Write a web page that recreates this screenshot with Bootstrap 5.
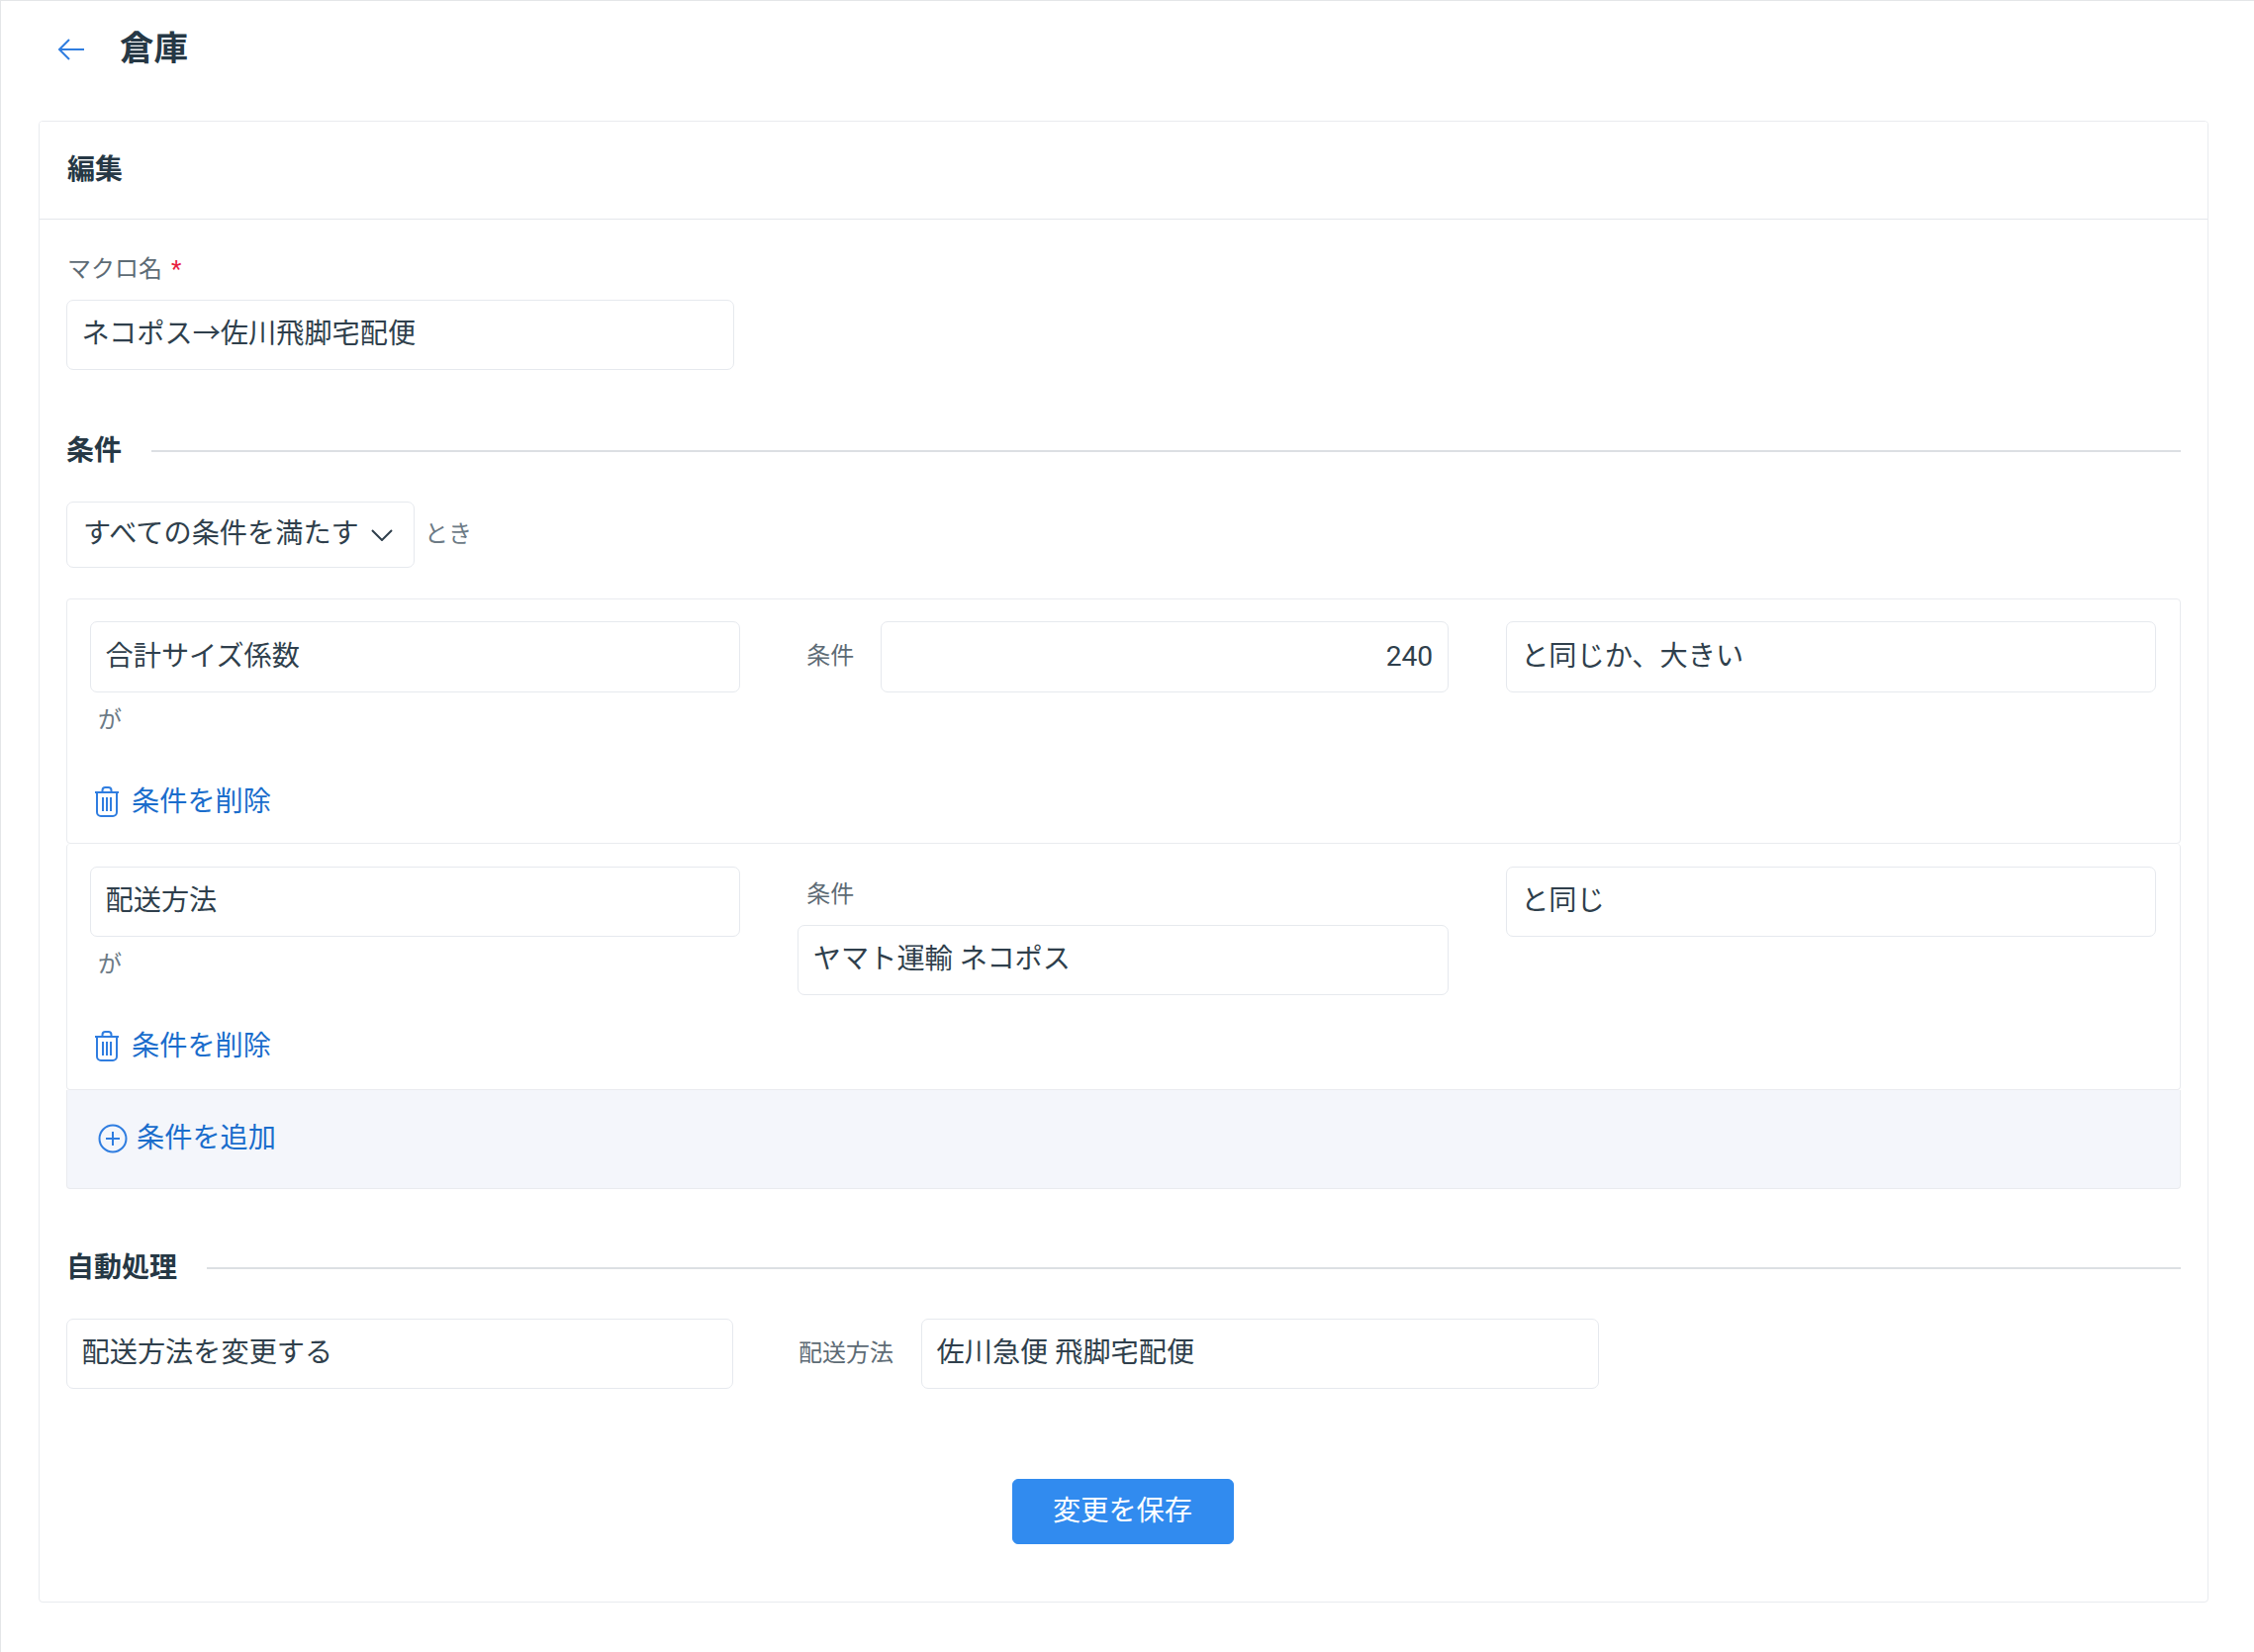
<!DOCTYPE html>
<html lang="ja">
<head>
    <meta charset="UTF-8">
    <meta name="viewport" content="width=device-width, initial-scale=1.0">
    <title>倉庫</title>
    <link href="https://cdn.jsdelivr.net/npm/bootstrap@5.3.0/dist/css/bootstrap.min.css" rel="stylesheet">
    <style>
        body {
            font-family: Roboto, "Noto Sans CJK JP", sans-serif;
            color: #2f3f4c;
            background: #fff;
        }
        .app-frame {
            min-height: 100vh;
            border-top: 1px solid #e4e6e8;
            border-left: 1px solid #e4e6e8;
            padding: 0 46px 0 38px;
        }
        .page-head {
            height: 97px;
            margin-bottom: 24px;
            margin-left: 19px;
        }
        .page-title {
            font-size: 34.5px;
            font-weight: 700;
            color: #263845;
            margin: 0 0 0 35px;
        }
        .edit-card {
            --bs-card-border-color: #e9ebef;
            --bs-card-cap-bg: #fff;
            --bs-card-border-radius: 4px;
            --bs-card-inner-border-radius: 3px;
            padding: 0;
        }
        .edit-card .card-header {
            height: 99px;
            padding: 0 28px;
            font-size: 28px;
            font-weight: 700;
            color: #263845;
            border-bottom-color: #e4e7eb;
        }
        .edit-card .card-body {
            padding: 33px 27px 58px 27px;
        }
        .field-label {
            font-size: 24px;
            line-height: 34px;
            color: #5d6b75;
            margin-left: 1px;
            margin-bottom: 14px;
        }
        .field-label .req {
            color: #e8203f;
            font-size: 24px;
            margin-left: 9px;
        }
        .ctl {
            height: 71px;
            padding: 0 14.5px;
            font-size: 28.2px;
            line-height: 1;
            color: #2f3f4c;
            border: 1.5px solid #e6e9ee;
            border-radius: 7px;
            display: flex;
            align-items: center;
        }
        .name-box {
            width: 675px;
        }
        .section-head {
            height: 40px;
            font-size: 28px;
            font-weight: 700;
            color: #263845;
            margin-top: 62px;
            margin-bottom: 31px;
            gap: 30px;
        }
        .cond-list + .section-head {
            margin-top: 60px;
        }
        .section-rule {
            height: 2px;
            background: #dcdfe3;
        }
        .match-select {
            width: 352px;
            height: 67px;
            padding: 0 21px 0 16px;
            justify-content: space-between;
        }
        .match-note {
            font-size: 24px;
            color: #6c7a85;
            margin: 0 0 2px 10px;
        }
        .cond-list {
            --bs-list-group-border-color: #e9ebef;
            --bs-list-group-border-radius: 4px;
            margin-top: 31px;
        }
        .cond-item {
            padding: 22px 24px 19px 23px;
            border-radius: 4px;
        }
        .cond-item:first-child .ctl {
            height: 72px;
        }
        .cond-item + .cond-item {
            padding-top: 23px;
            padding-bottom: 21px;
        }
        .cond-item + .cond-item .ga-note {
            margin-bottom: 47px;
        }
        .cond-row {
            --bs-gutter-x: 58px;
        }
        .ga-note {
            font-size: 24px;
            line-height: 34px;
            color: #6c7a85;
            margin: 11px 0 46px 8px;
        }
        .cond-label {
            font-size: 24px;
            color: #5d6b75;
            padding-left: 9px;
            margin-bottom: 2px;
        }
        .cond-label-top {
            line-height: 34px;
            margin: 11px 0 14px 0;
        }
        .cond-inline {
            gap: 27px;
        }
        .link-act {
            height: 40px;
            font-size: 28.2px;
            color: #1a6dcc;
            text-decoration: none;
            gap: 12px;
            margin-left: 4px;
        }
        .link-icon {
            margin-top: -2px;
        }
        .add-row {
            height: 100px;
            background: #f4f6fb;
            padding: 0 23px;
        }
        .add-row .link-act {
            margin-left: 8px;
            gap: 9px;
        }
        .action-row {
            gap: 66px;
        }
        .action-type {
            width: 674px;
            flex: none;
        }
        .action-value {
            width: 685px;
        }
        .action-pair {
            gap: 28px;
        }
        .save-wrap {
            margin-top: 91px;
            margin-right: 2px;
        }
        .save-btn {
            width: 224px;
            height: 66px;
            font-size: 28.2px;
            background: #318bef;
            border-color: #318bef;
            border-radius: 6px;
            padding: 0;
        }
    </style>
</head>
<body>
    <div class="app-frame">
        <div class="page-head d-flex align-items-center">
            <svg width="28" height="24" viewBox="0 0 28 24" fill="none" stroke="#2f7de0" stroke-width="2">
                <path d="M27 12H2M12 2 2 12l10 10"/>
            </svg>
            <h1 class="page-title">倉庫</h1>
        </div>

        <div class="card edit-card">
            <div class="card-header d-flex align-items-center">編集</div>
            <div class="card-body">
                <div class="field-label">マクロ名<span class="req">*</span></div>
                <div class="ctl name-box">ネコポス→佐川飛脚宅配便</div>

                <div class="section-head d-flex align-items-center">
                    <span>条件</span>
                    <div class="section-rule flex-grow-1"></div>
                </div>

                <div class="d-flex align-items-center">
                    <div class="ctl match-select">
                        <span>すべての条件を満たす</span>
                        <svg width="22" height="12" viewBox="0 0 22 12" fill="none" stroke="#2f3f4c" stroke-width="2">
                            <path d="M1 1l10 10L21 1"/>
                        </svg>
                    </div>
                    <span class="match-note">とき</span>
                </div>

                <div class="list-group cond-list">
                    <div class="list-group-item cond-item">
                        <div class="row cond-row">
                            <div class="col-4">
                                <div class="ctl">合計サイズ係数</div>
                                <div class="ga-note">が</div>
                            </div>
                            <div class="col-4">
                                <div class="d-flex align-items-center cond-inline">
                                    <span class="cond-label">条件</span>
                                    <div class="ctl flex-grow-1 justify-content-end">240</div>
                                </div>
                            </div>
                            <div class="col-4">
                                <div class="ctl">と同じか、大きい</div>
                            </div>
                        </div>
                        <a href="#" class="link-act d-inline-flex align-items-center">
                            <svg class="link-icon" width="26" height="31" viewBox="0 0 26 31" fill="none" stroke="#2f7de0" stroke-width="2">
                                <path d="M1 6h24M8.5 6V4a3 3 0 0 1 3-3h3a3 3 0 0 1 3 3v2M3 6v20a4 4 0 0 0 4 4h12a4 4 0 0 0 4-4V6M9 11v14M13 11v14M17 11v14"/>
                            </svg>
                            条件を削除
                        </a>
                    </div>
                    <div class="list-group-item cond-item">
                        <div class="row cond-row">
                            <div class="col-4">
                                <div class="ctl">配送方法</div>
                                <div class="ga-note">が</div>
                            </div>
                            <div class="col-4">
                                <div class="cond-label cond-label-top">条件</div>
                                <div class="ctl">ヤマト運輸 ネコポス</div>
                            </div>
                            <div class="col-4">
                                <div class="ctl">と同じ</div>
                            </div>
                        </div>
                        <a href="#" class="link-act d-inline-flex align-items-center">
                            <svg class="link-icon" width="26" height="31" viewBox="0 0 26 31" fill="none" stroke="#2f7de0" stroke-width="2">
                                <path d="M1 6h24M8.5 6V4a3 3 0 0 1 3-3h3a3 3 0 0 1 3 3v2M3 6v20a4 4 0 0 0 4 4h12a4 4 0 0 0 4-4V6M9 11v14M13 11v14M17 11v14"/>
                            </svg>
                            条件を削除
                        </a>
                    </div>
                    <div class="list-group-item add-row d-flex align-items-center">
                        <a href="#" class="link-act d-inline-flex align-items-center">
                            <svg class="link-icon" width="30" height="30" viewBox="0 0 30 30" fill="none" stroke="#2f7de0" stroke-width="2">
                                <circle cx="15" cy="15" r="13.5"/>
                                <path d="M15 8v14M8 15h14"/>
                            </svg>
                            条件を追加
                        </a>
                    </div>
                </div>

                <div class="section-head d-flex align-items-center">
                    <span>自動処理</span>
                    <div class="section-rule flex-grow-1"></div>
                </div>

                <div class="d-flex align-items-center action-row">
                    <div class="ctl action-type">配送方法を変更する</div>
                    <div class="d-flex align-items-center action-pair">
                        <span class="cond-label px-0">配送方法</span>
                        <div class="ctl action-value">佐川急便 飛脚宅配便</div>
                    </div>
                </div>

                <div class="text-center save-wrap">
                    <button type="button" class="btn btn-primary save-btn">変更を保存</button>
                </div>
            </div>
        </div>
    </div>
    <script src="https://cdn.jsdelivr.net/npm/bootstrap@5.3.0/dist/js/bootstrap.bundle.min.js"></script>
</body>
</html>
